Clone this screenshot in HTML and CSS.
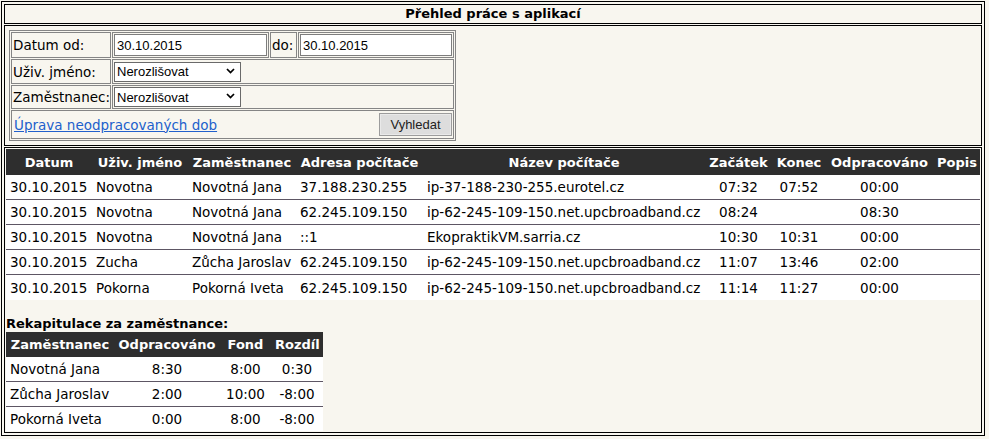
FILE: index.html
```html
<!DOCTYPE html>
<html lang="cs">
<head>
<meta charset="utf-8">
<title>Přehled práce s aplikací</title>
<link rel="stylesheet" href="styles.css">
</head>
<body>
<table class="frame">
  <tr><td class="title">Přehled práce s aplikací</td></tr>
  <tr>
    <td class="filters">
      <table class="form">
        <colgroup><col class="fc1"><col class="fc2"><col class="fc3"><col class="fc4"></colgroup>
        <tr class="r1">
          <td>Datum od:</td>
          <td><input class="field" type="text" value="30.10.2015"></td>
          <td>do:</td>
          <td><input class="field" type="text" value="30.10.2015"></td>
        </tr>
        <tr class="r2">
          <td>Uživ. jméno:</td>
          <td colspan="3"><span class="sel"><select><option>Nerozlišovat</option></select><svg class="chev" width="9" height="6" viewBox="0 0 9 6"><path d="M1 1 L4.5 4.6 L8 1" fill="none" stroke="#000" stroke-width="1.7"/></svg></span></td>
        </tr>
        <tr class="r3">
          <td>Zaměstnanec:</td>
          <td colspan="3"><span class="sel"><select><option>Nerozlišovat</option></select><svg class="chev" width="9" height="6" viewBox="0 0 9 6"><path d="M1 1 L4.5 4.6 L8 1" fill="none" stroke="#000" stroke-width="1.7"/></svg></span></td>
        </tr>
        <tr class="r4">
          <td colspan="4">
            <div class="actions">
              <a href="#" class="link">Úprava neodpracovaných dob</a>
              <button class="btn" type="button">Vyhledat</button>
            </div>
          </td>
        </tr>
      </table>
    </td>
  </tr>
  <tr>
    <td class="results">
      <table class="data">
        <colgroup>
          <col class="d1"><col class="d2"><col class="d3"><col class="d4"><col class="d5"><col class="d6"><col class="d7"><col class="d8"><col class="d9">
        </colgroup>
        <tr><th>Datum</th><th>Uživ. jméno</th><th>Zaměstnanec</th><th>Adresa počítače</th><th>Název počítače</th><th>Začátek</th><th>Konec</th><th>Odpracováno</th><th>Popis</th></tr>
        <tr><td>30.10.2015</td><td>Novotna</td><td>Novotná Jana</td><td>37.188.230.255</td><td>ip-37-188-230-255.eurotel.cz</td><td class="c">07:32</td><td class="c">07:52</td><td class="c">00:00</td><td></td></tr>
        <tr><td>30.10.2015</td><td>Novotna</td><td>Novotná Jana</td><td>62.245.109.150</td><td>ip-62-245-109-150.net.upcbroadband.cz</td><td class="c">08:24</td><td class="c"></td><td class="c">08:30</td><td></td></tr>
        <tr><td>30.10.2015</td><td>Novotna</td><td>Novotná Jana</td><td>::1</td><td>EkopraktikVM.sarria.cz</td><td class="c">10:30</td><td class="c">10:31</td><td class="c">00:00</td><td></td></tr>
        <tr><td>30.10.2015</td><td>Zucha</td><td>Zůcha Jaroslav</td><td>62.245.109.150</td><td>ip-62-245-109-150.net.upcbroadband.cz</td><td class="c">11:07</td><td class="c">13:46</td><td class="c">02:00</td><td></td></tr>
        <tr><td>30.10.2015</td><td>Pokorna</td><td>Pokorná Iveta</td><td>62.245.109.150</td><td>ip-62-245-109-150.net.upcbroadband.cz</td><td class="c">11:14</td><td class="c">11:27</td><td class="c">00:00</td><td></td></tr>
      </table>
      <div class="recap-title">Rekapitulace za zaměstnance:</div>
      <table class="recap">
        <colgroup><col class="k1"><col class="k2"><col class="k3"><col class="k4"></colgroup>
        <tr><th>Zaměstnanec</th><th>Odpracováno</th><th>Fond</th><th>Rozdíl</th></tr>
        <tr><td>Novotná Jana</td><td class="c">8:30</td><td class="c">8:00</td><td class="c">0:30</td></tr>
        <tr><td>Zůcha Jaroslav</td><td class="c">2:00</td><td class="c">10:00</td><td class="c">-8:00</td></tr>
        <tr><td>Pokorná Iveta</td><td class="c">0:00</td><td class="c">8:00</td><td class="c">-8:00</td></tr>
      </table>
    </td>
  </tr>
</table>
</body>
</html>
```

FILE: styles.css
```css
* { box-sizing: border-box; }
html, body { margin: 0; }
body {
  background: #f8f6ef;
  padding: 1px 0 0 1px;
  font-family: "DejaVu Sans", Verdana, sans-serif;
  font-size: 13px;
  color: #000;
}

/* outer frame */
.frame {
  width: 984px;
  border: 1px solid #000;
  border-collapse: separate;
  border-spacing: 2px 1px;
  padding: 1px 0;
}
.frame > tbody > tr > td { border: 1px solid #000; }
.title {
  height: 20px;
  padding: 0;
  text-align: center;
  font-weight: bold;
  line-height: 18px;
}
.filters { padding: 4px; height: 120px; vertical-align: top; }
.results { padding: 1px; vertical-align: top; }

/* filter form */
.form {
  width: 447px;
  table-layout: fixed;
  border: 1px solid #858585;
  border-collapse: separate;
  border-spacing: 1px;
}
.fc1 { width: 100px; }
.fc2 { width: 157px; }
.fc3 { width: 27px; }
.fc4 { width: 156px; }
.form td {
  border: 1px solid #858585;
  padding: 1px;
  vertical-align: middle;
  white-space: nowrap;
  font-size: 13.5px;
}
.r1 td, .r2 td { height: 25px; }
.r3 td { height: 24px; }
.r4 td { height: 29px; }

.field {
  display: block;
  width: 100%;
  height: 22px;
  margin: 0;
  border: 1px solid #7d7d7d;
  padding: 1px 2px;
  background: #fff;
  font: 13px "Liberation Sans", Arial, sans-serif;
  color: #000;
}
.sel { position: relative; display: inline-block; vertical-align: middle; }
.sel select {
  display: block;
  width: 127px;
  height: 20px;
  margin: 0;
  border: 1px solid #6a6a6a;
  padding: 0 2px;
  background: #fff;
  -webkit-appearance: none;
  appearance: none;
  font: 13px "Liberation Sans", Arial, sans-serif;
  color: #000;
}
.chev { position: absolute; right: 6px; top: 6px; }

.actions {
  display: flex;
  justify-content: space-between;
  align-items: center;
}
.link {
  color: #2160cc;
  text-decoration: underline;
  padding-left: 1px;
}
.btn {
  width: 73px;
  height: 23px;
  margin: 0;
  padding: 0;
  background: #dddddd;
  border: 1px solid #9c9c9c;
  box-shadow: inset 0 0 0 1px #e9e9e9;
  font: 13px "Liberation Sans", Arial, sans-serif;
  color: #222;
}

/* data tables */
.data, .recap {
  border-collapse: separate;
  border-spacing: 0;
  table-layout: fixed;
}
.data { width: 100%; }
.recap { width: 317px; }
.d1 { width: 86px; }
.d2 { width: 96px; }
.d3 { width: 108px; }
.d4 { width: 127px; }
.d5 { width: 282px; }
.d6 { width: 67px; }
.d7 { width: 54px; }
.d8 { width: 107px; }
.d9 { width: 47px; }
.k1 { width: 108px; }
.k2 { width: 106px; }
.k3 { width: 51px; }
.k4 { width: 52px; }

.data th, .recap th {
  background: #2e2e2e;
  color: #fff;
  font-weight: bold;
  padding: 0 4px;
  text-align: center;
  white-space: nowrap;
}
.data th { height: 26px; }
.recap th { height: 25px; }
.data td, .recap td {
  background: #fff;
  height: 25px;
  padding: 0 4px;
  border-bottom: 1px solid #5d5664;
  white-space: nowrap;
  text-align: left;
  font-size: 13.5px;
}
.data tr:last-child td, .recap tr:last-child td { border-bottom: 0; }
.recap tr:last-child td { height: 24px; }
.data td.c, .recap td.c { text-align: center; }

.recap-title {
  font-weight: bold;
  margin-top: 16px;
  line-height: 16px;
}
```
